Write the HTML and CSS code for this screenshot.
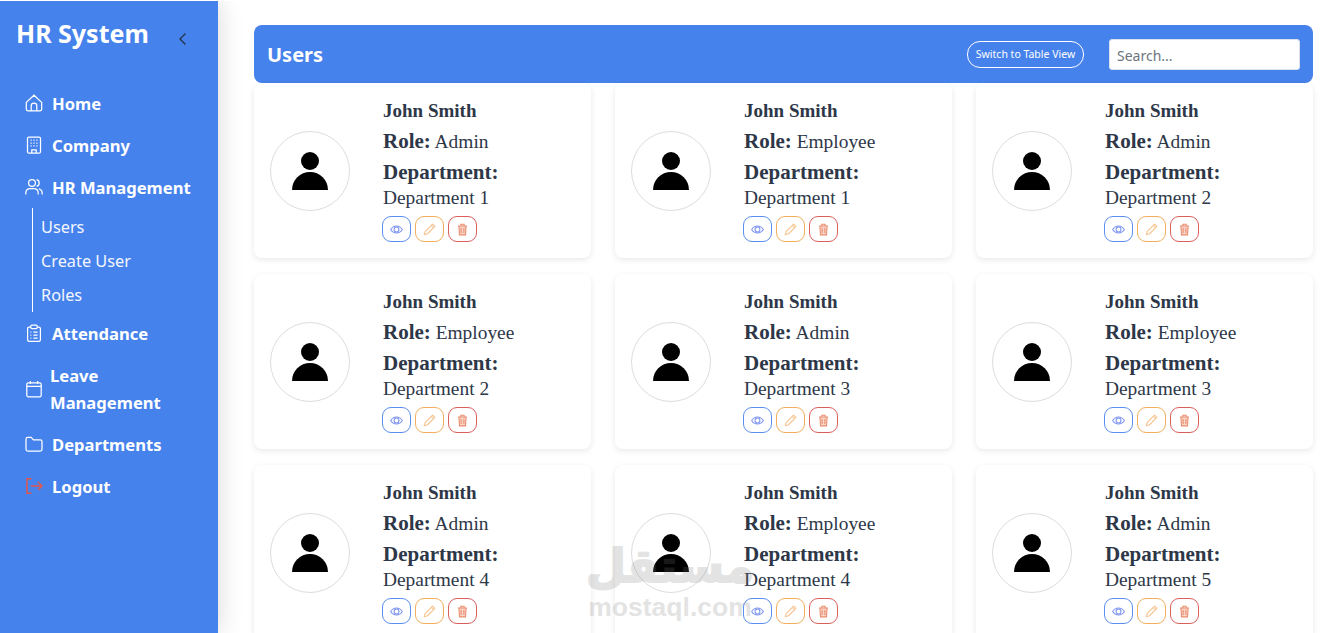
FILE: index.html
```html
<!DOCTYPE html>
<html lang="en">
<head>
<meta charset="utf-8">
<title>HR System</title>
<link rel="stylesheet" href="styles.css">
</head>
<body>
<svg class="defs" width="0" height="0" aria-hidden="true">
  <symbol id="eye" viewBox="0 0 16 16"><path d="M.8 8s2.700-4.400 7.200-4.400S15.200 8 15.200 8s-2.700 4.400-7.200 4.400S.8 8 .8 8z" fill="none" stroke="currentColor" stroke-width="1.300"/><circle cx="8" cy="8" r="3" fill="none" stroke="currentColor" stroke-width="1.300"/></symbol>
  <symbol id="pen" viewBox="0 0 16 16"><path d="M11.800 1.400l2.800 2.800-9 9-4 1.200 1.200-4zM10.200 3l2.800 2.800" fill="none" stroke="currentColor" stroke-width="1.400" stroke-linejoin="round"/></symbol>
  <symbol id="trash" viewBox="0 0 16 16"><path d="M3.600 3.800l.7 10.800h7.400l.7-10.800z" fill="currentColor" fill-opacity=".35"/><path d="M2.400 3.600h11.200M6 3.400V1.600h4v1.800M3.600 3.800l.7 10.800h7.400l.7-10.800M6.300 6v6.400M9.700 6v6.400" fill="none" stroke="currentColor" stroke-width="1.300"/></symbol>
  <symbol id="person" viewBox="1 1 78 78"><circle cx="40" cy="30" r="9"/><path d="M22 59a18 18 0 0 1 36 0z"/></symbol>
</svg>
<div class="app">
  <aside class="sidebar">
    <div class="brand">
      <h1 class="brand-title">HR System</h1>
      <svg class="chevron" viewBox="0 0 16 16"><path d="M10.500 2.500L5 8l5.500 5.500" fill="none" stroke="currentColor" stroke-width="1.400"/></svg>
    </div>
    <nav class="nav">
      <a class="nav-item"><svg class="nav-icon" viewBox="0 0 18 18"><path d="M1.300 8.400L9 1.200l7.700 7.200V15a1.800 1.800 0 0 1-1.800 1.800H3.100A1.800 1.800 0 0 1 1.300 15zM6.200 16.800v-5a2.800 2.800 0 0 1 5.600 0v5"/></svg><span>Home</span></a>
      <a class="nav-item"><svg class="nav-icon" viewBox="0 0 18 18"><rect x="2.500" y="1" width="13" height="16.200" rx="1.500"/><path d="M6.800 17v-3.200h4.400V17M5.500 4.200h1.200M8.400 4.200h1.200M11.300 4.200h1.200M5.500 7h1.200M8.400 7h1.200M11.300 7h1.200M5.500 9.800h1.200M8.400 9.800h1.200M11.300 9.800h1.200"/></svg><span>Company</span></a>
      <a class="nav-item"><svg class="nav-icon" viewBox="0 0 18 18"><circle cx="7" cy="5" r="3.400"/><path d="M.8 16.600v-1.400c0-2.800 2-4.600 4.600-4.600h3.200c2.600 0 4.600 1.800 4.600 4.600v1.400M11.600 1.700a3.400 3.400 0 0 1 0 6.600M13.800 10.800c2 .5 3.400 2.200 3.400 4.400v1.400"/></svg><span>HR Management</span></a>
      <ul class="subnav">
        <li>Users</li>
        <li>Create User</li>
        <li>Roles</li>
      </ul>
      <a class="nav-item"><svg class="nav-icon" viewBox="0 0 18 18"><path d="M5.500 3H4.200a1.600 1.600 0 0 0-1.600 1.600v11.200a1.600 1.600 0 0 0 1.600 1.600h9.600a1.600 1.600 0 0 0 1.600-1.600V4.600A1.600 1.600 0 0 0 13.800 3h-1.300"/><rect x="5.800" y="1" width="6.400" height="3.600" rx="1"/><path d="M5.400 8.200h1M8.400 8.200h4.200M5.400 11.200h1M8.400 11.200h4.200M5.400 14.200h1M8.400 14.200h4.200"/></svg><span>Attendance</span></a>
      <a class="nav-item"><svg class="nav-icon" viewBox="0 0 18 18"><rect x="1.800" y="2.800" width="14.400" height="14" rx="1.600"/><path d="M1.800 6.400h14.400M5.400 1v3M12.600 1v3"/></svg><span class="wrap-label">Leave Management</span></a>
      <a class="nav-item"><svg class="nav-icon" viewBox="0 0 18 18"><path d="M1 4.200A1.800 1.800 0 0 1 2.800 2.400h3.400l2.200 2.400h6.800A1.800 1.800 0 0 1 17 6.600v7.600a1.800 1.800 0 0 1-1.800 1.800H2.800A1.800 1.800 0 0 1 1 14.200z"/></svg><span>Departments</span></a>
      <a class="nav-item"><svg class="nav-icon logout-icon" viewBox="0 0 18 18"><path d="M6.500 1.800H2v14.400h4.500M6 9h11M13 5l4 4-4 4"/></svg><span>Logout</span></a>
    </nav>
  </aside>
  <main class="main">
    <header class="topbar">
      <h2 class="page-title">Users</h2>
      <button class="switch-btn" type="button">Switch to Table View</button>
      <input class="search" type="text" placeholder="Search...">
    </header>
    <section class="grid">
      <article class="card">
        <div class="avatar"><svg class="avatar-icon"><use href="#person"/></svg></div>
        <div class="info">
          <h3 class="name">John Smith</h3>
          <p class="role"><strong>Role:</strong> Admin</p>
          <p class="dept"><strong>Department:</strong> Department 1</p>
          <div class="actions"><button class="act view"><svg class="act-icon"><use href="#eye"/></svg></button><button class="act edit"><svg class="act-icon"><use href="#pen"/></svg></button><button class="act del"><svg class="act-icon"><use href="#trash"/></svg></button></div>
        </div>
      </article>
      <article class="card">
        <div class="avatar"><svg class="avatar-icon"><use href="#person"/></svg></div>
        <div class="info">
          <h3 class="name">John Smith</h3>
          <p class="role"><strong>Role:</strong> Employee</p>
          <p class="dept"><strong>Department:</strong> Department 1</p>
          <div class="actions"><button class="act view"><svg class="act-icon"><use href="#eye"/></svg></button><button class="act edit"><svg class="act-icon"><use href="#pen"/></svg></button><button class="act del"><svg class="act-icon"><use href="#trash"/></svg></button></div>
        </div>
      </article>
      <article class="card">
        <div class="avatar"><svg class="avatar-icon"><use href="#person"/></svg></div>
        <div class="info">
          <h3 class="name">John Smith</h3>
          <p class="role"><strong>Role:</strong> Admin</p>
          <p class="dept"><strong>Department:</strong> Department 2</p>
          <div class="actions"><button class="act view"><svg class="act-icon"><use href="#eye"/></svg></button><button class="act edit"><svg class="act-icon"><use href="#pen"/></svg></button><button class="act del"><svg class="act-icon"><use href="#trash"/></svg></button></div>
        </div>
      </article>
      <article class="card">
        <div class="avatar"><svg class="avatar-icon"><use href="#person"/></svg></div>
        <div class="info">
          <h3 class="name">John Smith</h3>
          <p class="role"><strong>Role:</strong> Employee</p>
          <p class="dept"><strong>Department:</strong> Department 2</p>
          <div class="actions"><button class="act view"><svg class="act-icon"><use href="#eye"/></svg></button><button class="act edit"><svg class="act-icon"><use href="#pen"/></svg></button><button class="act del"><svg class="act-icon"><use href="#trash"/></svg></button></div>
        </div>
      </article>
      <article class="card">
        <div class="avatar"><svg class="avatar-icon"><use href="#person"/></svg></div>
        <div class="info">
          <h3 class="name">John Smith</h3>
          <p class="role"><strong>Role:</strong> Admin</p>
          <p class="dept"><strong>Department:</strong> Department 3</p>
          <div class="actions"><button class="act view"><svg class="act-icon"><use href="#eye"/></svg></button><button class="act edit"><svg class="act-icon"><use href="#pen"/></svg></button><button class="act del"><svg class="act-icon"><use href="#trash"/></svg></button></div>
        </div>
      </article>
      <article class="card">
        <div class="avatar"><svg class="avatar-icon"><use href="#person"/></svg></div>
        <div class="info">
          <h3 class="name">John Smith</h3>
          <p class="role"><strong>Role:</strong> Employee</p>
          <p class="dept"><strong>Department:</strong> Department 3</p>
          <div class="actions"><button class="act view"><svg class="act-icon"><use href="#eye"/></svg></button><button class="act edit"><svg class="act-icon"><use href="#pen"/></svg></button><button class="act del"><svg class="act-icon"><use href="#trash"/></svg></button></div>
        </div>
      </article>
      <article class="card">
        <div class="avatar"><svg class="avatar-icon"><use href="#person"/></svg></div>
        <div class="info">
          <h3 class="name">John Smith</h3>
          <p class="role"><strong>Role:</strong> Admin</p>
          <p class="dept"><strong>Department:</strong> Department 4</p>
          <div class="actions"><button class="act view"><svg class="act-icon"><use href="#eye"/></svg></button><button class="act edit"><svg class="act-icon"><use href="#pen"/></svg></button><button class="act del"><svg class="act-icon"><use href="#trash"/></svg></button></div>
        </div>
      </article>
      <article class="card">
        <div class="avatar"><svg class="avatar-icon"><use href="#person"/></svg></div>
        <div class="info">
          <h3 class="name">John Smith</h3>
          <p class="role"><strong>Role:</strong> Employee</p>
          <p class="dept"><strong>Department:</strong> Department 4</p>
          <div class="actions"><button class="act view"><svg class="act-icon"><use href="#eye"/></svg></button><button class="act edit"><svg class="act-icon"><use href="#pen"/></svg></button><button class="act del"><svg class="act-icon"><use href="#trash"/></svg></button></div>
        </div>
      </article>
      <article class="card">
        <div class="avatar"><svg class="avatar-icon"><use href="#person"/></svg></div>
        <div class="info">
          <h3 class="name">John Smith</h3>
          <p class="role"><strong>Role:</strong> Admin</p>
          <p class="dept"><strong>Department:</strong> Department 5</p>
          <div class="actions"><button class="act view"><svg class="act-icon"><use href="#eye"/></svg></button><button class="act edit"><svg class="act-icon"><use href="#pen"/></svg></button><button class="act del"><svg class="act-icon"><use href="#trash"/></svg></button></div>
        </div>
      </article>
    </section>
  </main>
</div>
<div class="watermark"><span class="wm-ar" lang="ar" dir="rtl">مستقل</span><span class="wm-en">mostaql.com</span></div>
</body>
</html>
```
FILE: styles.css
```css
* { box-sizing: border-box; }
html, body { margin: 0; height: 633px; overflow: hidden; background: #fff; }
body { padding-top: 1px; font-family: "Noto Sans", "Open Sans", sans-serif; }
.defs { position: absolute; }
.app { display: flex; height: 632px; overflow: hidden; }

.sidebar {
  flex: 0 0 218px;
  background: #4682ec;
  color: #fff;
  box-shadow: 0 0 24px rgba(0, 0, 0, .16);
  padding: 14px 0 0 16px;
  position: relative;
  z-index: 1;
}
.brand { display: flex; align-items: center; height: 36px; margin-bottom: 31px; }
.brand-title { margin: 0; font-size: 25px; line-height: 36px; font-weight: 700; width: 159px; white-space: nowrap; }
.chevron { width: 16px; height: 16px; color: #25354f; margin-top: 11px; }
.nav { display: flex; flex-direction: column; }
.nav-item { display: flex; align-items: center; gap: 9px; min-height: 42px; padding-left: 9px; font-size: 16.600px; font-weight: 700; line-height: 27px; }
.nav-icon { flex: 0 0 18px; width: 18px; height: 18px; fill: none; stroke: #fff; stroke-width: 1.250; }
.logout-icon { stroke: #e2574c; stroke-width: 1.500; }
.wrap-label { width: 120px; margin: 0 0 0 -2px; padding: 8px 0 7px; }
.subnav { list-style: none; margin: 0 0 0 16px; padding: 2px 0 0 8px; border-left: 1px solid #fff; width: 170px; }
.subnav li { font-size: 16.300px; line-height: 34px; color: #f4f7ff; }

.main { flex: 1; min-width: 0; padding: 24px 28px 0 36px; }
.topbar {
  display: flex;
  align-items: center;
  height: 58px;
  background: #4682ec;
  border-radius: 8px;
  padding: 0 13px;
  color: #fff;
}
.page-title { margin: 0 auto 0 0; padding-top: 1px; font-size: 20px; font-weight: 700; }
.switch-btn {
  height: 27px;
  width: 117px;
  padding: 0;
  background: transparent;
  border: 1px solid #fff;
  border-radius: 13px;
  color: #fff;
  font: 10.500px "Noto Sans", sans-serif;
  white-space: nowrap;
}
.search {
  width: 191px;
  height: 31px;
  margin-left: 25px;
  border: 1px solid #dde3ee;
  border-radius: 3px;
  padding: 2px 7px 0;
  font: 14px "Noto Sans", sans-serif;
  color: #333;
}
.search::placeholder { color: #6c757d; opacity: 1; }

.grid { display: grid; grid-template-columns: repeat(3, 337px); column-gap: 24px; row-gap: 16px; }
.card {
  display: flex;
  align-items: center;
  height: 175px;
  padding: 16px;
  background: #fff;
  border-radius: 8px;
  box-shadow: 0 2px 6px rgba(0, 0, 0, .09);
  color: #2d3748;
  font-family: "Liberation Serif", Georgia, serif;
}
.avatar { flex: 0 0 80px; width: 80px; height: 80px; border: 1px solid #ddd; border-radius: 50%; margin-right: 33px; }
.avatar-icon { display: block; width: 78px; height: 78px; fill: #000; }
.info { flex: 1; }
.name { margin: 0 0 6px; font-size: 19px; line-height: 24px; font-weight: 700; }
.role { height: 24px; margin: 0 0 6px; font-size: 19.400px; line-height: 24px; }
.role strong { font-size: 21px; }
.dept { height: 52px; margin: 0; font-size: 19.400px; line-height: 26px; }
.dept strong { display: block; height: 26px; font-size: 21px; }
.actions { display: flex; gap: 4px; margin: 5px 0 0 -1px; }
.act { width: 29px; height: 26px; padding: 0; display: flex; align-items: center; justify-content: center; background: #fff; border: 1px solid; border-radius: 9px; }
.act-icon { width: 13px; height: 13px; }
.view { border-color: #5a8ff0; color: #7b93f0; }
.edit { border-color: #f2ae5c; color: #f6c490; }
.del { border-color: #da5f5b; color: #ea8a6a; }

.watermark {
  position: absolute;
  left: 590px;
  top: 540px;
  width: 160px;
  display: flex;
  flex-direction: column;
  align-items: center;
  color: #787878;
  opacity: .2;
  font-family: "Liberation Sans", sans-serif;
  font-weight: 700;
  pointer-events: none;
  z-index: 2;
}
.wm-ar { font-family: "DejaVu Sans", sans-serif; font-size: 46px; line-height: 52px; white-space: nowrap; -webkit-text-stroke: 2px #787878; }
.wm-en { font-size: 26.500px; line-height: 30px; white-space: nowrap; }
```
